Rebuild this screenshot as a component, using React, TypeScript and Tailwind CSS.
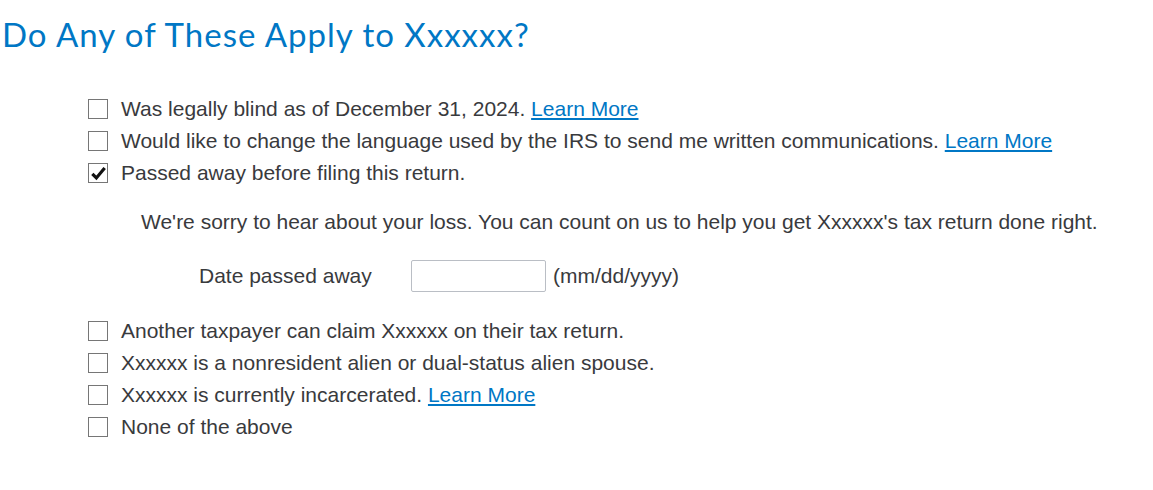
import React from "react";

const Box = ({ checked }: { checked?: boolean }) => (
  <span className="w-[20px] h-[20px] border border-[#767676] bg-white flex items-center justify-center shrink-0">
    {checked && (
      <svg width="17" height="17" viewBox="0 0 16 16">
        <path d="M2.2 8.3 L6 12.2 L13.8 2.8" fill="none" stroke="#111" strokeWidth="3" />
      </svg>
    )}
  </span>
);

const Link = () => (
  <a href="#" className="text-[#0077c5] underline">Learn More</a>
);

const Row = ({ checked, children }: { checked?: boolean; children: React.ReactNode }) => (
  <div className="flex items-center gap-[13px] h-[32px]">
    <Box checked={checked} />
    <span>{children}</span>
  </div>
);

export default function App() {
  return (
    <div className="w-[1153px] h-[490px] bg-white text-[#393a3d] text-[21px] leading-[24px]" style={{ fontFamily: '"Liberation Sans", Arial, sans-serif' }}>
      <h1 className="pl-[2px] pt-[14px] text-[33px] tracking-[1px] text-[#0077c5] leading-[40px]" style={{ fontFamily: 'Lato, "Noto Sans", sans-serif' }}>
        Do Any of These Apply to Xxxxxx?
      </h1>
      <div className="pl-[88px] pt-[39px]">
        <Row>Was legally blind as of December 31, 2024. <Link /></Row>
        <Row>Would like to change the language used by the IRS to send me written communications. <Link /></Row>
        <Row checked>Passed away before filing this return.</Row>
        <div className="pl-[53px] pt-[21px]">We're sorry to hear about your loss. You can count on us to help you get Xxxxxx's tax return done right.</div>
        <div className="flex items-center pl-[111px] pt-[26px] pb-[23px]">
          <span className="w-[212px]">Date passed away</span>
          <input className="w-[135px] h-[32px] border border-[#babec5] rounded-[2px] outline-none" />
          <span className="ml-[7px]">(mm/dd/yyyy)</span>
        </div>
        <Row>Another taxpayer can claim Xxxxxx on their tax return.</Row>
        <Row>Xxxxxx is a nonresident alien or dual-status alien spouse.</Row>
        <Row>Xxxxxx is currently incarcerated. <Link /></Row>
        <Row>None of the above</Row>
      </div>
    </div>
  );
}
